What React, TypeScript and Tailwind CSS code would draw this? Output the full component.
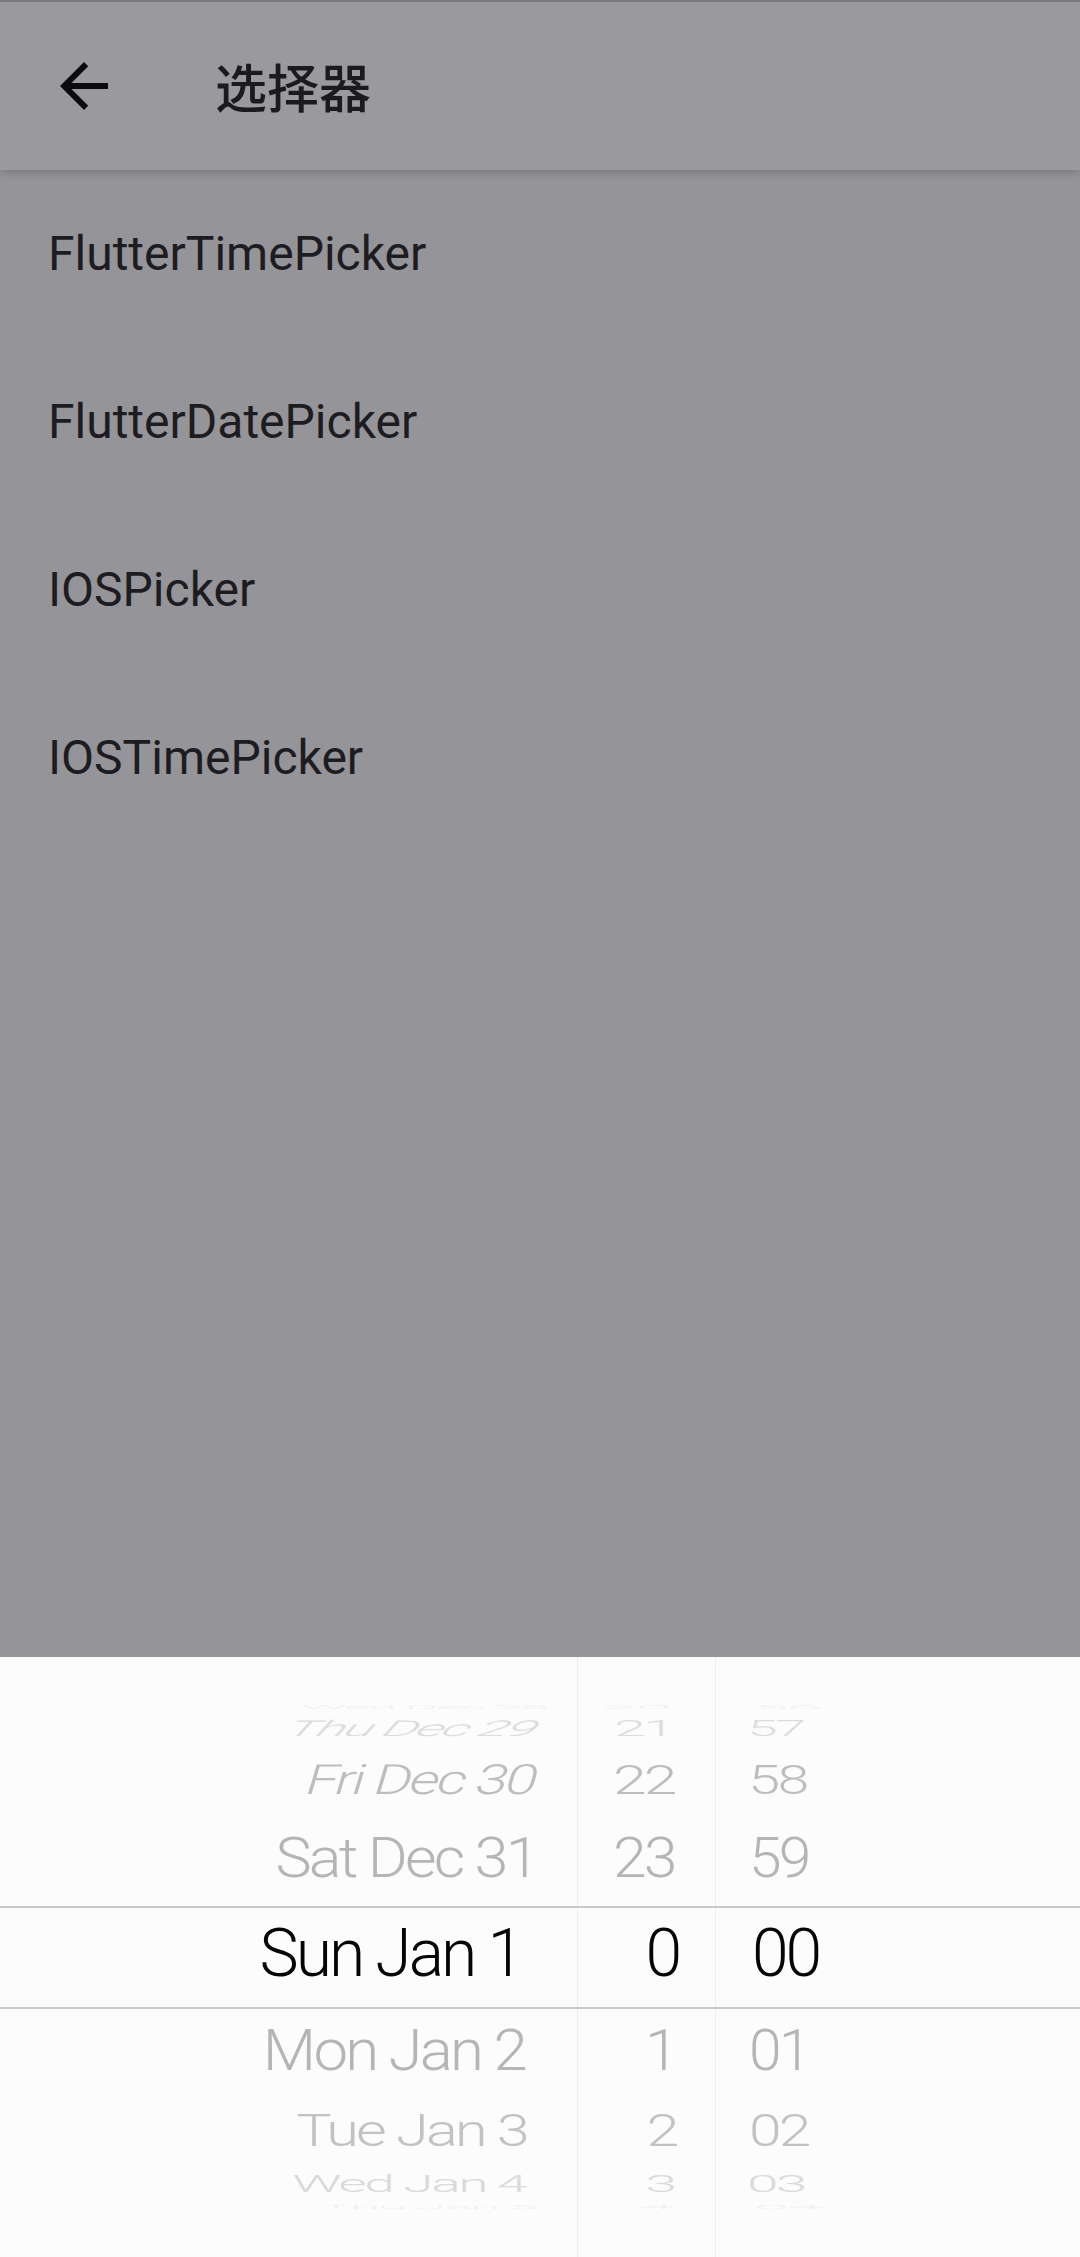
type Row = { text: string; h: string; cls: string }

const items = ['FlutterTimePicker', 'FlutterDatePicker', 'IOSPicker', 'IOSTimePicker']

// row heights keep the text centres where the wheel projects them
const dateRows: Row[] = [
  { text: 'Wed Dec 28', h: 'h-[6px]', cls: 'pr-[38px] text-[#f1f1f1] scale-y-[0.08] scale-x-[0.78]' },
  { text: 'Thu Dec 29', h: 'h-[38px]', cls: 'pr-[49px] text-[#dcdcdc] scale-y-[0.33] scale-x-[0.83] -skew-x-[20deg]' },
  { text: 'Fri Dec 30', h: 'h-[64px]', cls: 'pr-[47px] text-[#bdbdbd] scale-y-[0.63] scale-x-[0.88] -skew-x-[12deg]' },
  { text: 'Sat Dec 31', h: 'h-[94px]', cls: 'pr-[43px] text-[#b5b5b5] scale-y-[0.84] scale-x-[0.925]' },
  { text: 'Sun Jan 1', h: 'h-[96px]', cls: 'pr-[56px] text-[#050505]' },
  { text: 'Mon Jan 2', h: 'h-[98px]', cls: 'pr-[56px] text-[#b5b5b5] scale-y-[0.87] scale-x-[0.935]' },
  { text: 'Tue Jan 3', h: 'h-[62px]', cls: 'pr-[55px] text-[#c2c2c2] scale-y-[0.66] scale-x-[0.9]' },
  { text: 'Wed Jan 4', h: 'h-[44px]', cls: 'pr-[62px] text-[#dadada] scale-y-[0.35] scale-x-[0.835]' },
  { text: 'Thu Jan 5', h: 'h-[2px]', cls: 'pr-[48px] text-[#f1f1f1] scale-y-[0.08] scale-x-[0.83]' },
]

const hourRows: Row[] = [
  { text: '20', h: 'h-[6px]', cls: 'pr-[46px] text-[#f1f1f1] scale-y-[0.08]' },
  { text: '21', h: 'h-[38px]', cls: 'pr-[49px] text-[#dcdcdc] scale-y-[0.33] scale-x-[0.87]' },
  { text: '22', h: 'h-[64px]', cls: 'pr-[44px] text-[#bdbdbd] scale-y-[0.63] scale-x-[0.92]' },
  { text: '23', h: 'h-[94px]', cls: 'pr-[44px] text-[#b5b5b5] scale-y-[0.84] scale-x-[0.92]' },
  { text: '0', h: 'h-[96px]', cls: 'pr-[36px] text-[#050505]' },
  { text: '1', h: 'h-[98px]', cls: 'pr-[42px] text-[#b5b5b5] scale-y-[0.87] scale-x-[0.92]' },
  { text: '2', h: 'h-[62px]', cls: 'pr-[42px] text-[#c2c2c2] scale-y-[0.66] scale-x-[0.9]' },
  { text: '3', h: 'h-[44px]', cls: 'pr-[46px] text-[#dadada] scale-y-[0.35] scale-x-[0.87]' },
  { text: '4', h: 'h-[2px]', cls: 'pr-[44px] text-[#f1f1f1] scale-y-[0.08]' },
]

const minuteRows: Row[] = [
  { text: '56', h: 'h-[6px]', cls: 'pl-[37px] text-[#f1f1f1] scale-y-[0.08]' },
  { text: '57', h: 'h-[38px]', cls: 'pl-[37px] text-[#dcdcdc] scale-y-[0.33] scale-x-[0.84]' },
  { text: '58', h: 'h-[64px]', cls: 'pl-[37px] text-[#bdbdbd] scale-y-[0.63] scale-x-[0.87]' },
  { text: '59', h: 'h-[94px]', cls: 'pl-[37px] text-[#b5b5b5] scale-y-[0.84] scale-x-[0.89]' },
  { text: '00', h: 'h-[96px]', cls: 'pl-[36px] text-[#050505]' },
  { text: '01', h: 'h-[98px]', cls: 'pl-[37px] text-[#b5b5b5] scale-y-[0.87] scale-x-[0.89]' },
  { text: '02', h: 'h-[62px]', cls: 'pl-[37px] text-[#c2c2c2] scale-y-[0.66] scale-x-[0.89]' },
  { text: '03', h: 'h-[44px]', cls: 'pl-[36px] text-[#dadada] scale-y-[0.35] scale-x-[0.86]' },
  { text: '04', h: 'h-[2px]', cls: 'pl-[37px] text-[#f1f1f1] scale-y-[0.08]' },
]

function Wheel({ rows, align, className }: { rows: Row[]; align: 'left' | 'right'; className: string }) {
  return (
    <div className={`flex flex-col pt-[47px] ${className}`}>
      {rows.map((r) => (
        <div
          key={r.text}
          className={`${r.h} flex items-center ${align === 'right' ? 'justify-end' : 'justify-start'}`}
        >
          <span
            className={`inline-block whitespace-nowrap text-[66px] leading-none font-light tracking-[-3px] ${
              align === 'right' ? 'origin-right' : 'origin-left'
            } ${r.cls}`}
          >
            {r.text}
          </span>
        </div>
      ))}
    </div>
  )
}

export default function App() {
  return (
    <div className="w-[1080px] h-[2257px] flex flex-col bg-[#959499] font-['Roboto',sans-serif] overflow-hidden">
      <div className="h-[2px] bg-[#7d7c81]" />
      <header className="relative z-10 h-[168px] flex items-center bg-[#9a999e] shadow-[0_3px_8px_rgba(0,0,0,0.18)]">
        <div className="ml-[48px] w-[72px] h-[72px] flex items-center justify-center">
          <svg width="72" height="72" viewBox="0 0 24 24" fill="#0b0b0d">
            <path d="M20 11H7.83l5.59-5.59L12 4l-8 8 8 8 1.41-1.41L7.83 13H20v-2z" />
          </svg>
        </div>
        <h1 className="ml-[95px] text-[52px] leading-none font-medium text-[#1b1a1f] font-['Noto_Sans_CJK_SC','Noto_Sans',sans-serif]">
          选择器
        </h1>
      </header>

      <ul className="flex flex-col">
        {items.map((t) => (
          <li key={t} className="h-[168px] flex items-center pl-[48px] text-[48px] text-[#1d1c21]">
            {t}
          </li>
        ))}
      </ul>

      <div className="flex-1" />

      <div className="relative h-[600px] flex bg-[#fcfcfc] overflow-hidden">
        <Wheel rows={dateRows} align="right" className="w-[577px]" />
        <Wheel rows={hourRows} align="right" className="w-[138px] border-l border-[#eeeeee]" />
        <Wheel rows={minuteRows} align="left" className="flex-1 border-l border-[#eeeeee]" />
        <div className="absolute inset-x-0 top-[249px] h-[103px] border-y-2 border-[#c9c9c9] pointer-events-none" />
      </div>
    </div>
  )
}
